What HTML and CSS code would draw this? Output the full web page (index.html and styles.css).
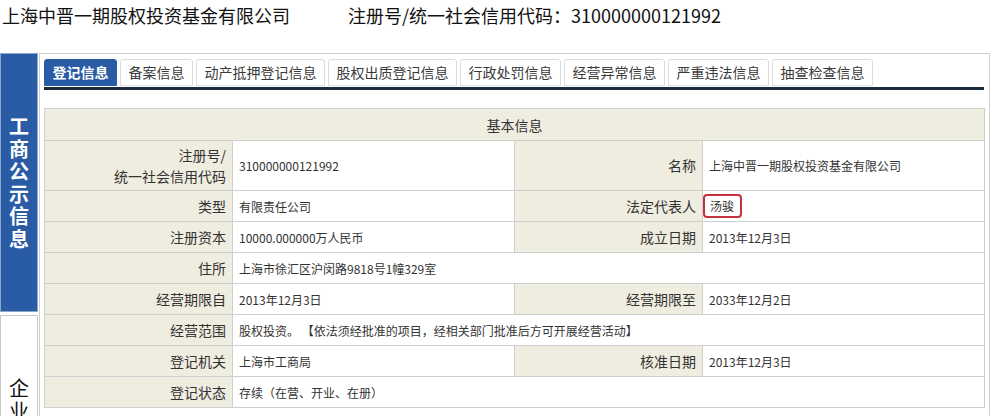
FILE: index.html
```html
<!DOCTYPE html>
<html lang="zh">
<head>
<meta charset="utf-8">
<title>上海中晋一期股权投资基金有限公司</title>
<link rel="stylesheet" href="styles.css">
</head>
<body>
<div class="top">
  <span class="name">上海中晋一期股权投资基金有限公司</span>
  <span class="code">注册号/统一社会信用代码：310000000121992</span>
</div>
<div class="layout">
  <div class="side">
    <div class="side-box side-active"><span class="side-text">工商公示信息</span></div>
    <div class="side-box side-plain"><span class="side-text">企业公示信息</span></div>
  </div>
  <div class="main">
    <ul class="tabs">
      <li class="tab tab-active">登记信息</li>
      <li class="tab">备案信息</li>
      <li class="tab">动产抵押登记信息</li>
      <li class="tab">股权出质登记信息</li>
      <li class="tab">行政处罚信息</li>
      <li class="tab">经营异常信息</li>
      <li class="tab">严重违法信息</li>
      <li class="tab">抽查检查信息</li>
    </ul>
    <div class="tab-line"></div>
    <table class="info">
      <colgroup>
        <col class="c-label"><col class="c-value"><col class="c-label"><col class="c-value">
      </colgroup>
      <tr class="head"><th colspan="4">基本信息</th></tr>
      <tr class="tall">
        <td class="label">注册号/<br>统一社会信用代码</td>
        <td class="value">310000000121992</td>
        <td class="label">名称</td>
        <td class="value">上海中晋一期股权投资基金有限公司</td>
      </tr>
      <tr>
        <td class="label">类型</td>
        <td class="value">有限责任公司</td>
        <td class="label">法定代表人</td>
        <td class="value"><span class="mark">汤骏</span></td>
      </tr>
      <tr>
        <td class="label">注册资本</td>
        <td class="value">10000.000000万人民币</td>
        <td class="label">成立日期</td>
        <td class="value">2013年12月3日</td>
      </tr>
      <tr>
        <td class="label">住所</td>
        <td class="value" colspan="3">上海市徐汇区沪闵路9818号1幢329室</td>
      </tr>
      <tr>
        <td class="label">经营期限自</td>
        <td class="value">2013年12月3日</td>
        <td class="label">经营期限至</td>
        <td class="value">2033年12月2日</td>
      </tr>
      <tr>
        <td class="label">经营范围</td>
        <td class="value" colspan="3">股权投资。 【依法须经批准的项目，经相关部门批准后方可开展经营活动】</td>
      </tr>
      <tr>
        <td class="label">登记机关</td>
        <td class="value">上海市工商局</td>
        <td class="label">核准日期</td>
        <td class="value">2013年12月3日</td>
      </tr>
      <tr>
        <td class="label">登记状态</td>
        <td class="value" colspan="3">存续（在营、开业、在册）</td>
      </tr>
    </table>
  </div>
</div>
</body>
</html>
```

FILE: styles.css
```css
html, body {
  margin: 0;
  padding: 0;
  background: #fff;
}
body {
  font-family: "Noto Sans CJK SC", "Noto Sans", sans-serif;
  color: #222;
  width: 1001px;
  height: 416px;
  overflow: hidden;
}
.top {
  height: 53px;
  box-sizing: border-box;
  padding: 4px 0 0 2px;
  font-size: 18px;
  line-height: 22px;
  color: #111;
  white-space: nowrap;
}
.code {
  margin-left: 54px;
}
.layout {
  display: flex;
  align-items: flex-start;
}
.side {
  width: 38px;
  display: flex;
  flex-direction: column;
  gap: 3px;
}
.side-box {
  box-sizing: border-box;
  width: 38px;
  display: flex;
  justify-content: center;
  padding: 61px 0 60px;
  border: 1px solid #c8c8c8;
}
.side-active {
  background: #2a5ba5;
  color: #fff;
  height: 259px;
  border-color: #8aa6cc;
}
.side-plain {
  background: #fff;
  color: #111;
  height: 200px;
}
.side-text {
  width: 20px;
  font-size: 20px;
  line-height: 22.6px;
  font-weight: bold;
  word-break: break-all;
  text-align: center;
}
.side-plain .side-text {
  font-weight: normal;
}
.main {
  margin-left: 1px;
  width: 951px;
  height: 400px;
  box-sizing: border-box;
  border: 1px solid #cfcfcf;
  padding: 5px 5px 0 4px;
}
.tabs {
  list-style: none;
  margin: 0;
  padding: 0;
  display: flex;
  gap: 3px;
  height: 27px;
}
.tab {
  box-sizing: border-box;
  height: 27px;
  padding: 0 7.5px;
  border: 1px solid #dcdcdc;
  border-radius: 3px 3px 0 0;
  font-size: 14px;
  line-height: 25px;
  color: #3a3a3a;
  background: #fff;
  white-space: nowrap;
}
.tab-active {
  background: #2a5ba5;
  border-color: #2a5ba5;
  color: #fff;
  font-weight: bold;
}
.tab-line {
  margin-top: 1px;
  height: 3px;
  width: 940px;
  background: #1b2d3d;
}
.info {
  margin-top: 18px;
  width: 940px;
  border-collapse: collapse;
  table-layout: fixed;
}
.c-label { width: 188px; }
.c-value { width: 282px; }
.info th, .info td {
  border: 1px solid #cfcfcf;
  padding: 0 6px;
  height: 30px;
  box-sizing: content-box;
}
.head th {
  background: #efece0;
  font-weight: normal;
  font-size: 14px;
  color: #333;
  height: 31px;
  text-align: center;
}
.tall td {
  height: 49px;
}
.label {
  background: #efece0;
  text-align: right;
  font-size: 14px;
  line-height: 21px;
  color: #333;
}
.value {
  background: #fff;
  font-size: 12px;
  color: #333;
  white-space: nowrap;
}
.mark {
  display: inline-block;
  margin-left: -6px;
  padding: 1px 6px 2px 5px;
  border: 2px solid #c5313c;
  border-radius: 4px;
  line-height: 17px;
}
```
